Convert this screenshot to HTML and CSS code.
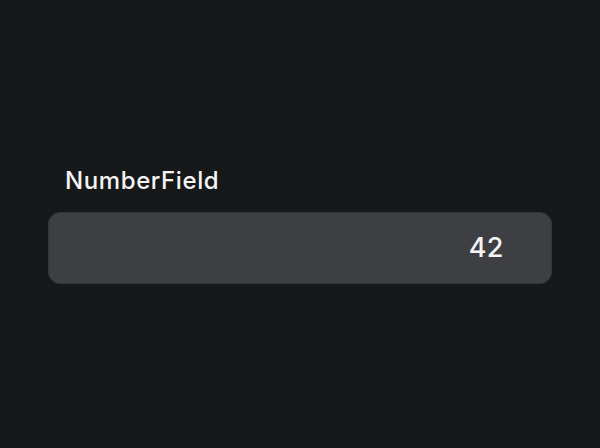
FILE: index.html
```html
<!DOCTYPE html>
<html lang="en">
<head>
<meta charset="UTF-8">
<meta name="viewport" content="width=device-width, initial-scale=1.0">
<title>NumberField</title>
<link rel="stylesheet" href="styles.css">
</head>
<body>
<div class="container">
    <label class="field-label" for="number_field">NumberField</label>
    <input class="number-input" type="text" id="number_field" value="42" inputmode="numeric">
</div>
</body>
</html>
```

FILE: styles.css
```css
html, body {
    height: 100%;
}
body {
    margin: 0;
    background-color: #17181a;
    font-family: Inter, "Noto Sans", sans-serif;
    color: #f4f4f5;
}
.container {
    height: 100%;
    box-sizing: border-box;
    padding: 3px 48px 0;
    display: flex;
    flex-direction: column;
    justify-content: center;
    gap: 17px;
}
.field-label {
    padding-left: 17px;
    font-size: 24px;
    font-weight: 500;
    letter-spacing: 0.6px;
    line-height: 28px;
}
.number-input {
    box-sizing: border-box;
    width: 100%;
    height: 72px;
    padding: 0 47px 2px 17px;
    border: 1px solid #343538;
    border-radius: 12px;
    background-color: #3e3f42;
    color: #f4f4f5;
    font-family: Inter, "Noto Sans", sans-serif;
    font-size: 27px;
    font-weight: 500;
    letter-spacing: 0.5px;
    text-align: right;
    outline: none;
}
```
